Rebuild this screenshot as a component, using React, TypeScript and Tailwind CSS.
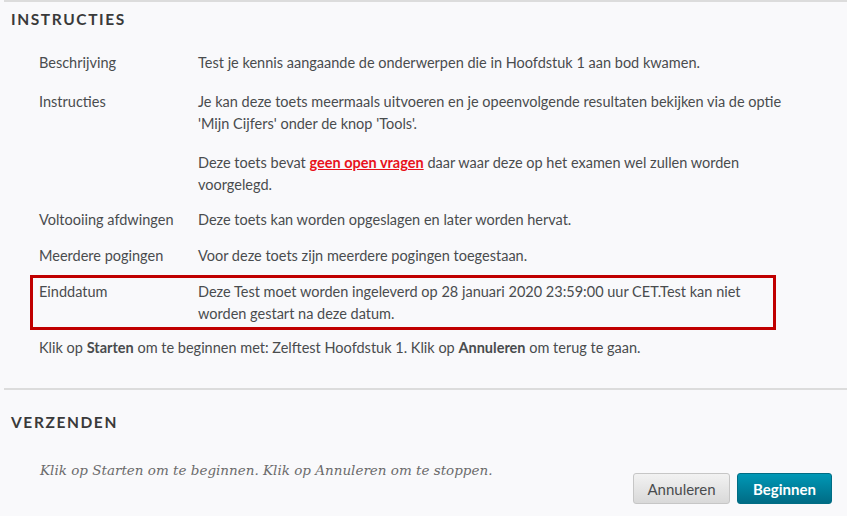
const rows = [
  {
    label: "Beschrijving",
    body: <p>Test je kennis aangaande de onderwerpen die in Hoofdstuk 1 aan bod kwamen.</p>,
  },
];

const App = () => {
  return (
    <div
      className="w-[847px] h-[516px] overflow-hidden bg-[#f9f9fb] text-[#494c4e] text-[14.5px] leading-[22px]"
      style={{ fontFamily: "Lato, 'Open Sans', sans-serif" }}
    >
      <div className="ml-[4px] border-t-2 border-[#dcdcdc] h-[388px]">
        <h2 className="pl-[7px] pt-[6px] text-[15.5px] font-bold tracking-[1.6px] text-[#3a3a3a]">INSTRUCTIES</h2>

        <div className="mt-[16px] ml-[26px] w-[800px] flex flex-col">
          {rows.map((r) => (
            <div key={r.label} className="flex border-[3px] border-transparent px-[6px] py-[3px]">
              <div className="w-[159px] shrink-0">{r.label}</div>
              <div className="flex-1">{r.body}</div>
            </div>
          ))}

          <div className="mt-[5px] flex border-[3px] border-transparent px-[6px] py-[3px]">
            <div className="w-[159px] shrink-0">Instructies</div>
            <div className="flex-1">
              <p className="w-[605px]">
                Je kan deze toets meermaals uitvoeren en je opeenvolgende resultaten bekijken via de optie
                'Mijn Cijfers' onder de knop 'Tools'.
              </p>
              <p className="mt-[17px] pr-[40px]">
                Deze toets bevat{" "}
                <span className="font-bold text-[#e8121b] underline">geen open vragen</span> daar waar deze op het
                examen wel zullen worden voorgelegd.
              </p>
            </div>
          </div>

          <div className="mt-[1px] flex border-[3px] border-transparent px-[6px] py-[3px]">
            <div className="w-[159px] shrink-0">Voltooiing afdwingen</div>
            <div className="flex-1">Deze toets kan worden opgeslagen en later worden hervat.</div>
          </div>

          <div className="mt-[2px] flex border-[3px] border-transparent px-[6px] py-[3px]">
            <div className="w-[159px] shrink-0">Meerdere pogingen</div>
            <div className="flex-1">Voor deze toets zijn meerdere pogingen toegestaan.</div>
          </div>

          <div className="mt-[2px] w-[746px] flex border-[3px] border-[#c00000] px-[6px] pt-[3px] pb-[2px]">
            <div className="w-[159px] shrink-0">Einddatum</div>
            <div className="flex-1">
              Deze Test moet worden ingeleverd op 28 januari 2020 23:59:00 uur CET.Test kan niet worden gestart na
              deze datum.
            </div>
          </div>

          <p className="mt-[7px] px-[9px]">
            Klik op <b>Starten</b> om te beginnen met: Zelftest Hoofdstuk 1. Klik op <b>Annuleren</b> om terug te
            gaan.
          </p>
        </div>
      </div>

      <div className="ml-[4px] border-t-2 border-[#dcdcdc]">
        <h2 className="pl-[7px] pt-[21px] text-[15.5px] font-bold tracking-[1.6px] text-[#3a3a3a]">VERZENDEN</h2>
        <div className="mt-[26px] flex items-start justify-between pr-[15px]">
          <p
            className="pl-[36px] text-[13.5px] italic text-[#6b6b6b]"
            style={{ fontFamily: "'DejaVu Serif', Georgia, serif" }}
          >
            Klik op Starten om te beginnen. Klik op Annuleren om te stoppen.
          </p>
          <div className="mt-[14px] flex gap-[7px]">
            <button className="h-[31px] w-[97px] rounded-[3px] border border-[#c6c6c6] bg-gradient-to-b from-[#f2f2f2] to-[#d9d9d9] text-[15px] text-[#494c4e]">
              Annuleren
            </button>
            <button className="h-[31px] w-[95px] rounded-[3px] border border-[#006d84] bg-gradient-to-b from-[#0098b6] to-[#006c85] text-[15px] font-bold text-white">
              Beginnen
            </button>
          </div>
        </div>
      </div>
    </div>
  );
};

export default App;
